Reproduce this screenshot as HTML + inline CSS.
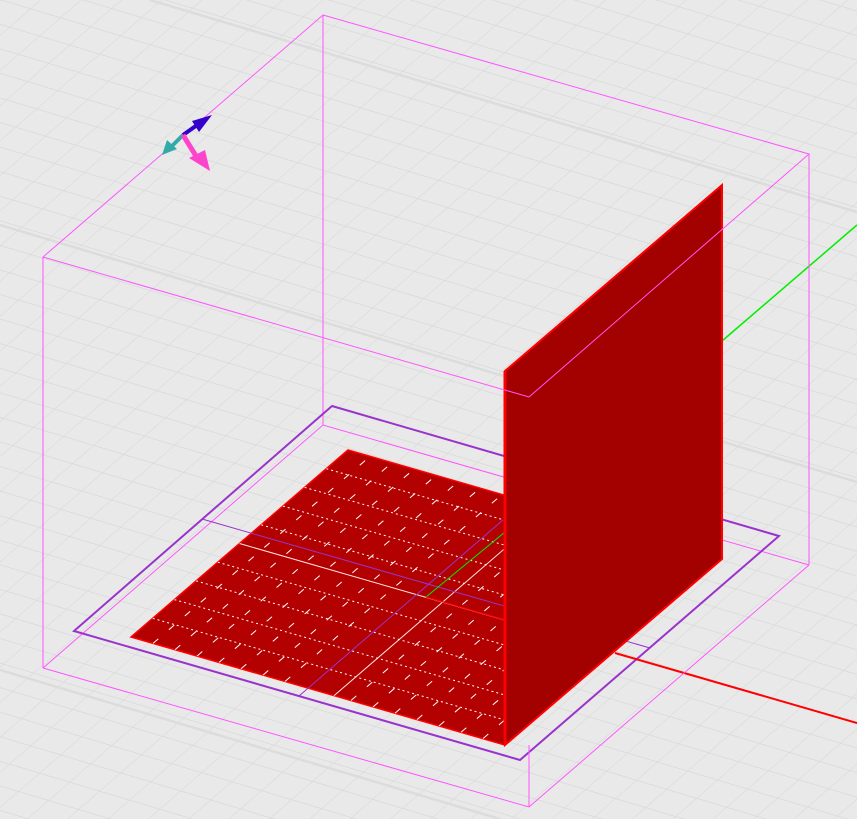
<!DOCTYPE html>
<html><head><meta charset="utf-8">
<style>
html,body{margin:0;padding:0;background:#e9e9e9;overflow:hidden}
svg{display:block}
</style></head>
<body>
<svg width="857" height="819" viewBox="0 0 857 819" xmlns="http://www.w3.org/2000/svg">
<defs>
<pattern id="g" patternUnits="userSpaceOnUse" width="30" height="21" patternTransform="matrix(1,0.3,1,-0.87,0,0)">
<path d="M0 0H30M0 0V21" stroke="#d6d6d6" stroke-width="1.1" fill="none"/>
</pattern>
<clipPath id="fc"><polygon points="348,450 131,637 505,745 722,558"/></clipPath>
</defs>
<rect width="857" height="819" fill="#e9e9e9"/>
<rect width="857" height="819" fill="url(#g)"/>
<g stroke="#dcdcdc" stroke-width="2.5" fill="none">
<line x1="0" y1="225" x2="857" y2="482"/>
<line x1="0" y1="670" x2="500" y2="819"/>
<line x1="150" y1="0" x2="857" y2="212"/>
</g>

<g stroke="#ff55ff" stroke-width="1" fill="none">
<line x1="323" y1="15" x2="323" y2="425"/>
<polyline points="43,668 323,425 809,565"/>
</g>

<polygon points="332,406 779,536 520,760 74,631" fill="none" stroke="#9933cc" stroke-width="2"/>

<polygon points="348,450 131,637 505,745 722,558" fill="#b30000" stroke="#ff0000" stroke-width="1.5"/>
<g clip-path="url(#fc)" stroke="#ffffff" stroke-width="1" fill="none" stroke-dasharray="2 3">
<line x1="152.7" y1="618.3" x2="526.7" y2="726.3"/>
<line x1="174.4" y1="599.6" x2="548.4" y2="707.6"/>
<line x1="196.1" y1="580.9" x2="570.1" y2="688.9"/>
<line x1="217.8" y1="562.2" x2="591.8" y2="670.2"/>
<line x1="261.2" y1="524.8" x2="635.2" y2="632.8"/>
<line x1="282.9" y1="506.1" x2="656.9" y2="614.1"/>
<line x1="304.6" y1="487.4" x2="678.6" y2="595.4"/>
<line x1="326.3" y1="468.7" x2="700.3" y2="576.7"/>
</g>
<g clip-path="url(#fc)" stroke="#ffffff" stroke-width="1" fill="none" stroke-dasharray="7 14">
<line x1="153" y1="643.4" x2="370" y2="456.4"/>
<line x1="175" y1="649.7" x2="392" y2="462.7"/>
<line x1="197" y1="656.1" x2="414" y2="469.1"/>
<line x1="219" y1="662.4" x2="436" y2="475.4"/>
<line x1="241" y1="668.8" x2="458" y2="481.8"/>
<line x1="263" y1="675.1" x2="480" y2="488.1"/>
<line x1="285" y1="681.5" x2="502" y2="494.5"/>
<line x1="351" y1="700.5" x2="568" y2="513.5"/>
<line x1="373" y1="706.9" x2="590" y2="519.9"/>
<line x1="395" y1="713.2" x2="612" y2="526.2"/>
<line x1="417" y1="719.6" x2="634" y2="532.6"/>
<line x1="439" y1="725.9" x2="656" y2="538.9"/>
<line x1="461" y1="732.3" x2="678" y2="545.3"/>
<line x1="483" y1="738.6" x2="700" y2="551.6"/>
</g>
<g clip-path="url(#fc)" fill="none" stroke-width="1">
<line x1="239.5" y1="543.5" x2="613.5" y2="651.5" stroke="#ffe6e6"/>
<line x1="329" y1="700" x2="546" y2="513" stroke="#ffe6e6"/>
</g>
<line x1="202" y1="519" x2="650" y2="648" stroke="#9933cc" stroke-width="1"/>
<line x1="503" y1="520" x2="299" y2="696" stroke="#9933cc" stroke-width="1"/>
<line x1="426" y1="597" x2="505" y2="532" stroke="#00ee00" stroke-width="1"/>
<line x1="426" y1="597" x2="505" y2="620" stroke="#ff0000" stroke-width="1.2"/>
<line x1="615" y1="653" x2="857" y2="723" stroke="#ff0000" stroke-width="2"/>
<line x1="722" y1="341" x2="857" y2="225" stroke="#00ee00" stroke-width="1.5"/>

<polygon points="505,371 722,185 722,559 505,745" fill="#a30000" stroke="#ff0000" stroke-width="2"/>
<line x1="505" y1="371" x2="505" y2="745" stroke="#ff0000" stroke-width="3"/>

<g stroke="#ff55ff" stroke-width="1" fill="none">
<polygon points="323,15 809,154 529,397 43,257"/>
<line x1="43" y1="257" x2="43" y2="668"/>
<line x1="809" y1="154" x2="809" y2="565"/>
<line x1="529" y1="745" x2="529" y2="807"/>
<polyline points="43,668 529,807 809,565"/>
</g>

<g>
<line x1="183" y1="135" x2="200" y2="123" stroke="#3300cc" stroke-width="4"/>
<polygon points="212,115 192,121 199,132" fill="#3300cc"/>
<line x1="183" y1="135" x2="172" y2="146" stroke="#33aaaa" stroke-width="4"/>
<polygon points="162,155 167,140 177,149" fill="#33aaaa"/>
<line x1="183" y1="135" x2="196" y2="156" stroke="#ff44cc" stroke-width="5"/>
<polygon points="210,171 189,158 205,150" fill="#ff44cc"/>
</g>
</svg>
</body></html>
